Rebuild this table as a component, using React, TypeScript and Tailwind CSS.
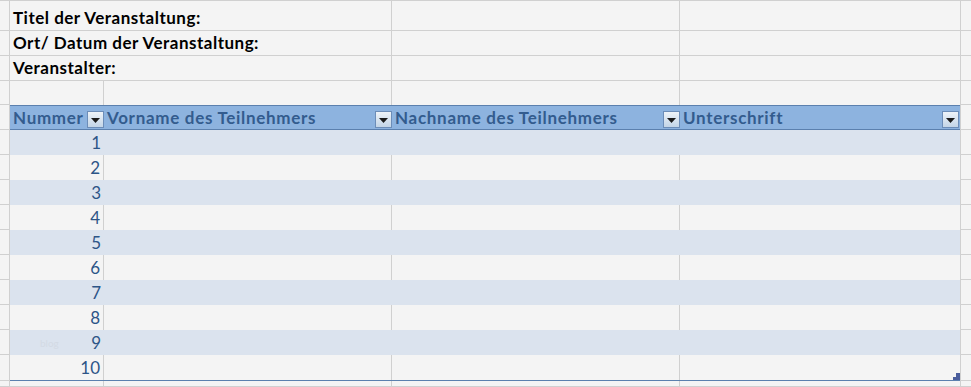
import React from "react";

const rowsTop = [
  { label: "Titel der Veranstaltung:", h: "h-[30px]" },
  { label: "Ort/ Datum der Veranstaltung:", h: "h-[25px]" },
  { label: "Veranstalter:", h: "h-[25px]" },
];

const headers = [
  { label: "Nummer", w: "w-[94px]" },
  { label: "Vorname des Teilnehmers", w: "w-[288px]" },
  { label: "Nachname des Teilnehmers", w: "w-[288px]" },
  { label: "Unterschrift", w: "w-[280px] pr-[1px]" },
];

const FilterButton = () => (
  <span className="ml-auto mb-[1px] flex h-[17px] w-[17px] shrink-0 items-center justify-center self-end border border-[#6c8db8] bg-gradient-to-b from-[#eef3f8] to-[#c3d5e7]">
    <svg width="9" height="5" viewBox="0 0 9 5" className="mt-[2px]">
      <path d="M0 0h9L4.5 5z" fill="#1b1b1b" />
    </svg>
  </span>
);

export default function App() {
  return (
    <div
      className="h-[387px] w-[971px] overflow-hidden bg-[#f4f4f4] text-[17px] tracking-[0.5px]"
      style={{ fontFamily: "Lato, 'Open Sans', sans-serif" }}
    >
      <div className="border-t border-[#d0d0d0]">
        {rowsTop.map((r) => (
          <div key={r.label} className={`flex ${r.h} border-b border-[#d0d0d0]`}>
            <div className="w-[10px] border-r border-[#d0d0d0]" />
            <div className="flex w-[382px] items-end border-r border-[#d0d0d0] pb-[3px] pl-[3px] font-bold leading-none text-black">
              <span className="pb-[1px]">{r.label}</span>
            </div>
            <div className="w-[288px] border-r border-[#d0d0d0]" />
            <div className="w-[281px] border-r border-[#d0d0d0]" />
            <div className="flex-1" />
          </div>
        ))}

        {/* empty row above the table */}
        <div className="flex h-[24px]">
          <div className="w-[10px] border-r border-b border-[#d0d0d0]" />
          <div className="w-[94px] border-r border-[#d0d0d0]" />
          <div className="w-[288px] border-r border-[#d0d0d0]" />
          <div className="w-[288px] border-r border-[#d0d0d0]" />
          <div className="w-[280px]" />
          <div className="flex-1 border-l border-b border-[#d0d0d0]" />
        </div>

        {/* table header */}
        <div className="flex h-[25px]">
          <div className="w-[10px] border-r border-b border-[#d0d0d0]" />
          <div className="flex w-[950px] border-y border-[#5b80ae] bg-[#8db3df] font-bold tracking-[0.7px] text-[#335c8e]">
            {headers.map((h) => (
              <div key={h.label} className={`flex ${h.w} items-center pl-[3px] whitespace-nowrap`}>
                <span className="leading-none">{h.label}</span>
                <FilterButton />
              </div>
            ))}
          </div>
          <div className="flex-1 border-l border-b border-[#d0d0d0]" />
        </div>

        {/* data rows */}
        {Array.from({ length: 10 }, (_, i) => {
          const banded = i % 2 === 0;
          const last = i === 9;
          return (
            <div key={i} className={`flex ${last ? "h-[26px]" : "h-[25px]"}`}>
              <div className="w-[10px] border-r border-b border-[#d0d0d0]" />
              <div
                className={`relative flex w-[950px] ${banded ? "bg-[#dbe3ee]" : ""} ${
                  last ? "border-b border-[#5b80ae]" : ""
                }`}
              >
                <div
                  className={`relative flex w-[94px] items-center justify-end pr-[3px] text-[17px] tracking-normal text-[#2d5587] ${
                    banded ? "" : "border-r border-[#d0d0d0]"
                  }`}
                >
                  {i === 8 && (
                    <span className="absolute left-[30px] top-[6px] text-[10px] text-[#d3dae4]">blog</span>
                  )}
                  {i + 1}
                </div>
                <div className={`w-[288px] ${banded ? "" : "border-r border-[#d0d0d0]"}`} />
                <div className={`w-[288px] ${banded ? "" : "border-r border-[#d0d0d0]"}`} />
                <div className="w-[280px]" />
                {last && (
                  <svg
                    width="7"
                    height="7"
                    viewBox="0 0 7 7"
                    className="absolute right-0 bottom-0"
                  >
                    <path d="M7 0v7H0V4h3V0z" fill="#4a5d9c" />
                  </svg>
                )}
              </div>
              <div className="flex-1 border-l border-b border-[#d0d0d0]" />
            </div>
          );
        })}

        <div className="flex h-[6px]">
          <div className="w-[10px] border-r border-b border-[#d0d0d0]" />
          <div className="w-[94px] border-r border-b border-[#d0d0d0]" />
          <div className="w-[288px] border-r border-b border-[#d0d0d0]" />
          <div className="w-[288px] border-r border-b border-[#d0d0d0]" />
          <div className="w-[280px] border-b border-[#d0d0d0]" />
          <div className="flex-1 border-l border-b border-[#d0d0d0]" />
        </div>
      </div>
    </div>
  );
}
